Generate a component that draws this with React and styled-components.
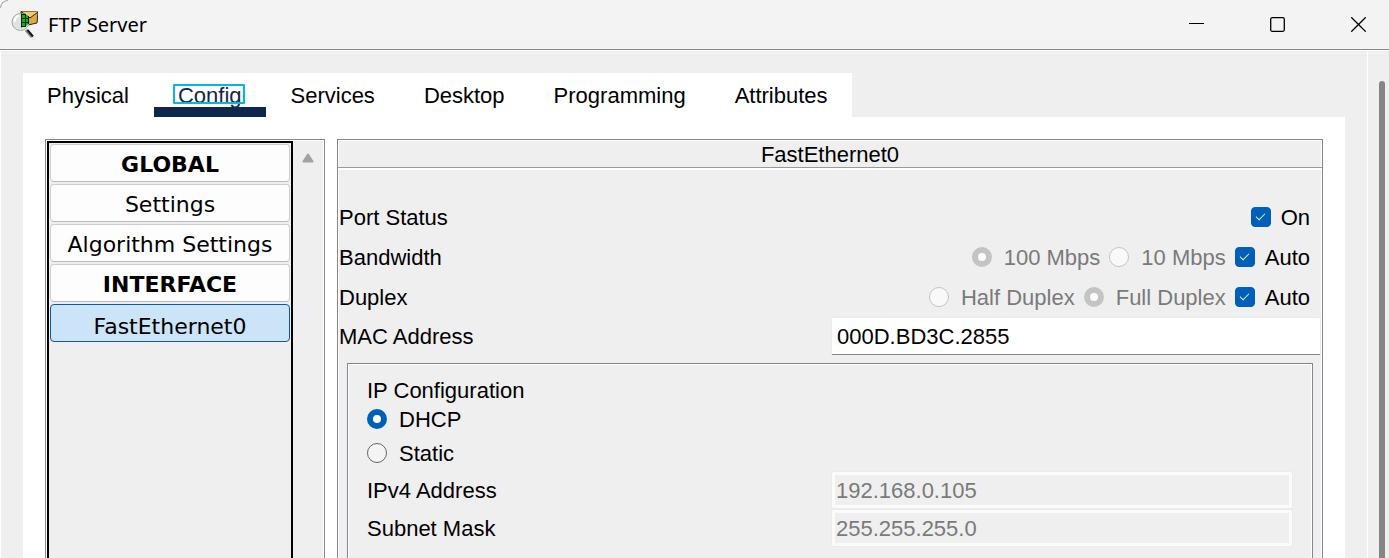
import React, { useState } from "react";
import styled, { createGlobalStyle, css } from "styled-components";

const Global = createGlobalStyle`
  *, *::before, *::after { box-sizing: border-box; }
  body { margin: 0; background: #fff; }
  button, input { font: inherit; color: inherit; }
`;

const line = "#84868d";
const surface = "#efefef";

const Window = styled.div`
  display: flex;
  flex-direction: column;
  height: 100vh;
  overflow: hidden;
  font: 22px/26px "Liberation Sans", Arial, sans-serif;
  color: #000;
`;

const TitleBar = styled.header`
  position: relative;
  flex: none;
  display: flex;
  align-items: center;
  height: 50px;
  padding-left: 10px;
  background: #f3f3f3;
  border-bottom: 1px solid #84878b;
  border-top-left-radius: 8px;

  &::before {
    content: "";
    position: absolute;
    top: 0;
    left: 0;
    width: 8px;
    height: 8px;
    border: solid #aaa;
    border-width: 1px 0 0 1px;
    border-top-left-radius: 8px;
  }
`;

const Title = styled.h1`
  flex: 1;
  margin: 0 0 0 10px;
  font: 400 20px/28px "Noto Sans", "Segoe UI", sans-serif;
`;

const WindowButtons = styled.div`
  display: flex;
  gap: 20px;
`;

const WindowButton = styled.button`
  display: grid;
  place-items: center;
  width: 61px;
  height: 46px;
  padding: 0;
  border: 0;
  background: none;
`;

const Body = styled.div`
  flex: 1;
  min-height: 0;
  display: flex;
  background: ${surface};
  border-top: 1px solid #fff;
  border-left: 1px solid #fff;
`;

const Main = styled.main`
  flex: 1;
  min-width: 0;
  display: flex;
  flex-direction: column;
  padding: 22px 22px 0;
`;

const PageScroll = styled.div`
  flex: none;
  width: 22px;
  padding: 30px 4px 0 11px;
  border-left: 1px solid #fff;
`;

const PageThumb = styled.div`
  height: 100%;
  background: #858585;
  border-radius: 3px 3px 0 0;
`;

const Tabs = styled.nav`
  flex: none;
  align-self: flex-start;
  display: flex;
  gap: 1px;
  height: 44px;
  background: #fff;
`;

const Tab = styled.button`
  padding: 12px 24px 0;
  border: 0;
  border-bottom: 10px solid ${(p) => (p.$active ? "#0f274d" : "transparent")};
  background: none;
  color: ${(p) => (p.$active ? "#0f274d" : "#000")};
  line-height: 22px;
  white-space: nowrap;
`;

const TabText = styled.span`
  position: relative;
  ${(p) =>
    p.$focused &&
    css`
      &::after {
        content: "";
        position: absolute;
        inset: 1px -3px 4px -5px;
        border: 2px solid #00b9ea;
        border-radius: 1px;
      }
    `}
`;

const Panel = styled.div`
  flex: 1;
  min-height: 0;
  display: flex;
  gap: 12px;
  padding: 22px 22px 0;
  background: #fff;
`;

const framed = css`
  background: ${surface};
  border: solid ${line};
  border-width: 1px 1px 0;
  box-shadow: inset 1px 1px #fff, inset -1px 0 #fff;
`;

const Sidebar = styled.aside`
  ${framed}
  flex: none;
  display: flex;
  width: 280px;
  padding: 1px 1px 0;
`;

const Sections = styled.nav`
  flex: none;
  display: flex;
  flex-direction: column;
  gap: 2px;
  width: 246px;
  padding: 1px;
  border: solid #000;
  border-width: 2px 2px 0;
`;

const SectionButton = styled.button`
  flex: none;
  height: 38px;
  padding: ${(p) => (p.$active ? 7 : 3)}px 0 0;
  border: 1px solid ${(p) => (p.$active ? "#0d5aa3" : "#cfcfcf")};
  border-bottom-color: ${(p) => (p.$active ? "#0d5aa3" : "#bababa")};
  border-radius: 4px;
  background: ${(p) => (p.$active ? "#cce4f7" : "#fdfdfd")};
  font: ${(p) => (p.$heading ? 700 : 400)} 22px/26px Verdana, "DejaVu Sans", sans-serif;
  white-space: nowrap;
`;

const SideScroll = styled.div`
  flex: 1;
  display: flex;
  justify-content: center;
  padding-top: 11px;
`;

const Details = styled.section`
  ${framed}
  flex: 1;
  min-width: 0;
`;

const DetailsTitle = styled.h2`
  height: 28px;
  margin: 0;
  padding-top: 2px;
  border-bottom: 1px solid #9a9a9a;
  box-shadow: 0 2px #fff;
  font: inherit;
  text-align: center;
`;

const Rows = styled.div`
  padding: 29px 1px 8px;
`;

const Row = styled.div`
  display: grid;
  grid-template-columns: 1fr 1fr;
  align-items: center;
  gap: 2px;
  height: 38px;
`;

const RowLabel = styled.label`
  padding-top: 1px;
`;

const OptionsRow = styled.div`
  display: flex;
  align-items: center;
  justify-content: space-between;
  height: 40px;
  padding-right: 11px;
`;

const Caption = styled.span`
  padding-top: 2px;
`;

const Options = styled.div`
  display: flex;
  gap: 9px;
`;

const Choice = styled.label`
  display: flex;
  align-items: center;
  gap: ${(p) => (p.$radio ? 12 : 10)}px;
  color: ${(p) => (p.$disabled ? "#7a7a7a" : "inherit")};
  white-space: nowrap;
`;

const Check = styled.input`
  appearance: none;
  flex: none;
  display: grid;
  place-items: center;
  width: 20px;
  height: 20px;
  margin: 0;
  border: 1px solid #858585;
  border-radius: 4px;

  &:checked {
    background: #005fb8;
    border-color: #005fb8;
  }
  &:checked::after {
    content: "";
    width: 5px;
    height: 9px;
    margin-top: -3px;
    border: solid #dcebf8;
    border-width: 0 1px 1px 0;
    transform: rotate(45deg);
  }
`;

const Radio = styled.input`
  appearance: none;
  flex: none;
  width: 20px;
  height: 20px;
  margin: 0;
  border: 1px solid #666;
  border-radius: 50%;
  background: #f4f4f4;

  &:checked {
    border: 6px solid #005fb8;
    background: #fff;
  }
  &:disabled {
    border-color: #c4c4c4;
    background: #f9f9f9;
  }
  &:disabled:checked {
    background: #fff;
  }
`;

const Field = styled.input`
  width: 100%;
  height: 38px;
  padding: 2px 5px 0;
  border: 1px solid #ebebeb;
  border-bottom-color: #858585;
  border-radius: 2px;
  background: #fff;
  outline: 0;

  &:disabled {
    padding: 2px 4px 0;
    border-color: #ebebeb;
    background: ${surface};
    box-shadow: inset 0 0 0 3px #fbfbfb;
    color: #7a7a7a;
  }
`;

const IpGroup = styled.fieldset`
  ${framed}
  min-width: 0;
  height: 400px;
  margin: 0 9px;
  padding: 14px 19px 0;
`;

const GroupTitle = styled.div`
  line-height: 26px;
`;

const IpChoices = styled.div`
  display: flex;
  flex-direction: column;
  gap: 6px;
  padding: 1px 0 4px;
`;

function AppIcon() {
  return (
    <svg width="28" height="28" viewBox="0 0 28 28" aria-hidden="true">
      <path d="M16 19 22 26" stroke="#8a8a8a" strokeWidth="3" />
      <path d="M17.500 19 23 25.500" stroke="#171717" strokeWidth="2" />
      <path d="M11 .5 28 1 27 12 18 14 11 7Z" fill="#dca942" stroke="#302411" />
      <path d="M11 .5 20 7 28 1" fill="#f3ca66" stroke="#302411" />
      <circle cx="10.500" cy="11" r="8.500" fill="#e2e2df" stroke="#a8a8a6" />
      <path d="M4.500 11Q5 6 9 4.500" fill="none" stroke="#fff" strokeWidth="2" />
      <path d="M11 3C17 3 20 7 19 11Q18 16 11 16Z" fill="#0bb524" />
      <path d="M11.500 2.500v14M15.500 3v12.500M18.500 5v8M11 3.500h5M11 7.500h8M11 11.500h8M11 15.500h5" stroke="#032806" />
    </svg>
  );
}

function CheckChoice({ children }) {
  return (
    <Choice>
      <Check type="checkbox" defaultChecked />
      <Caption>{children}</Caption>
    </Choice>
  );
}

function RadioChoice({ children, disabled, ...rest }) {
  return (
    <Choice $radio $disabled={disabled}>
      <Radio type="radio" disabled={disabled} {...rest} />
      <Caption>{children}</Caption>
    </Choice>
  );
}

const tabs = ["Physical", "Config", "Services", "Desktop", "Programming", "Attributes"];
const sections = [
  { name: "GLOBAL", heading: true },
  { name: "Settings" },
  { name: "Algorithm Settings" },
  { name: "INTERFACE", heading: true },
  { name: "FastEthernet0" },
];

export default function App() {
  const [tab, setTab] = useState("Config");
  const [section, setSection] = useState("FastEthernet0");

  return (
    <>
      <Global />
      <Window>
        <TitleBar>
          <AppIcon />
          <Title>FTP Server</Title>
          <WindowButtons>
            <WindowButton aria-label="Minimize">
              <svg width="15" height="15"><path d="M0 6.500h15" stroke="#000" /></svg>
            </WindowButton>
            <WindowButton aria-label="Maximize">
              <svg width="15" height="15">
                <rect x=".7" y=".7" width="13.6" height="13.6" rx="1.5" fill="none" stroke="#000" strokeWidth="1.3" />
              </svg>
            </WindowButton>
            <WindowButton aria-label="Close">
              <svg width="15" height="15"><path d="M.3.3 14.7 14.7M14.7.3.3 14.7" stroke="#000" strokeWidth="1.3" /></svg>
            </WindowButton>
          </WindowButtons>
        </TitleBar>
        <Body>
          <Main>
            <Tabs>
              {tabs.map((name) => (
                <Tab key={name} $active={name === tab} onClick={() => setTab(name)}>
                  <TabText $focused={name === tab}>{name}</TabText>
                </Tab>
              ))}
            </Tabs>
            <Panel>
              <Sidebar>
                <Sections>
                  {sections.map(({ name, heading }) => (
                    <SectionButton
                      key={name}
                      $heading={heading}
                      $active={name === section}
                      onClick={() => !heading && setSection(name)}
                    >
                      {name}
                    </SectionButton>
                  ))}
                </Sections>
                <SideScroll>
                  <svg width="12" height="12" aria-hidden="true">
                    <path d="M6 2.500 10.500 9.500H1.500Z" fill="#a2a2a2" stroke="#a2a2a2" strokeWidth="2" strokeLinejoin="round" />
                  </svg>
                </SideScroll>
              </Sidebar>
              <Details>
                <DetailsTitle>FastEthernet0</DetailsTitle>
                <Rows>
                  <OptionsRow>
                    <Caption>Port Status</Caption>
                    <CheckChoice>On</CheckChoice>
                  </OptionsRow>
                  <OptionsRow>
                    <Caption>Bandwidth</Caption>
                    <Options>
                      <RadioChoice name="bandwidth" disabled defaultChecked>100 Mbps</RadioChoice>
                      <RadioChoice name="bandwidth" disabled>10 Mbps</RadioChoice>
                      <CheckChoice>Auto</CheckChoice>
                    </Options>
                  </OptionsRow>
                  <OptionsRow>
                    <Caption>Duplex</Caption>
                    <Options>
                      <RadioChoice name="duplex" disabled>Half Duplex</RadioChoice>
                      <RadioChoice name="duplex" disabled defaultChecked>Full Duplex</RadioChoice>
                      <CheckChoice>Auto</CheckChoice>
                    </Options>
                  </OptionsRow>
                  <Row>
                    <RowLabel htmlFor="mac">MAC Address</RowLabel>
                    <Field id="mac" defaultValue="000D.BD3C.2855" />
                  </Row>
                </Rows>
                <IpGroup aria-labelledby="ip-title">
                  <GroupTitle id="ip-title">IP Configuration</GroupTitle>
                  <IpChoices>
                    <RadioChoice name="ip" defaultChecked>DHCP</RadioChoice>
                    <RadioChoice name="ip">Static</RadioChoice>
                  </IpChoices>
                  <Row>
                    <RowLabel htmlFor="ipv4">IPv4 Address</RowLabel>
                    <Field id="ipv4" disabled defaultValue="192.168.0.105" />
                  </Row>
                  <Row>
                    <RowLabel htmlFor="mask">Subnet Mask</RowLabel>
                    <Field id="mask" disabled defaultValue="255.255.255.0" />
                  </Row>
                </IpGroup>
              </Details>
            </Panel>
          </Main>
          <PageScroll>
            <PageThumb />
          </PageScroll>
        </Body>
      </Window>
    </>
  );
}
